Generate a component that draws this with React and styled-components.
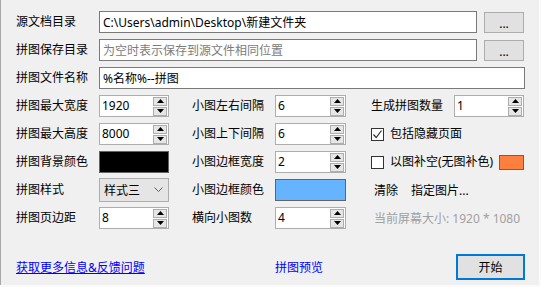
import React from 'react'
import styled, { createGlobalStyle } from 'styled-components'

const GlobalStyle = createGlobalStyle`
  html, body {
    margin: 0;
    padding: 0;
    background: #fafafa;
  }
  body {
    font-family: "Noto Sans", "Noto Sans CJK SC", sans-serif;
    font-size: 12px;
    color: #000;
  }
`

const Panel = styled.div`
  box-sizing: border-box;
  width: 540px;
  height: 285px;
  padding: 11px 14px 0 15px;
  background: #f0f0f0;
  border-left: 1px solid #a8a8a8;
  border-right: 1px solid #fcfcfc;
  display: flex;
  flex-direction: column;
  gap: 6px;
`

const PathRow = styled.div`
  display: flex;
  align-items: center;
  height: 22px;
  width: ${p => p.$full ? '509px' : '508px'};
`

const Label = styled.span`
  flex: 0 0 ${p => p.$width || 83}px;
  line-height: 16px;
  white-space: nowrap;
`

const TextInput = styled.div`
  box-sizing: border-box;
  flex: 1;
  height: 22px;
  padding: 0 3px;
  display: flex;
  align-items: center;
  background: #fff;
  border: 1px solid #7a7a7a;
  color: ${p => p.$placeholder ? '#7c7c7c' : '#000'};
  white-space: nowrap;
  overflow: hidden;
`

const BrowseButton = styled.div`
  box-sizing: border-box;
  flex: 0 0 40px;
  height: 21px;
  margin-left: 7px;
  margin-top: 1px;
  background: #e1e1e1;
  border: 1px solid #adadad;
  display: flex;
  align-items: flex-end;
  justify-content: center;
  padding-bottom: 3px;
  line-height: 10px;
`

const Grid = styled.div`
  display: grid;
  grid-template-columns: 153px 156px 153px;
  grid-auto-rows: 22px;
  column-gap: 23px;
  row-gap: 6px;
`

const Field = styled.div`
  display: flex;
  align-items: center;
`

const SpinBox = styled.div`
  box-sizing: border-box;
  width: ${p => p.$width || 70}px;
  height: 22px;
  background: #fff;
  border: 1px solid #adadad;
  display: flex;
  align-items: center;
  padding-left: 2px;
`

const SpinValue = styled.span`
  flex: 1;
  line-height: 16px;
`

const SpinButtons = styled.div`
  display: flex;
  flex-direction: column;
  gap: 1px;
  margin-right: 1px;
`

const SpinButton = styled.div`
  box-sizing: border-box;
  width: 14px;
  height: 9px;
  background: #e6e6e6;
  border: 1px solid #adadad;
  display: flex;
  align-items: center;
  justify-content: center;
`

const Swatch = styled.div`
  box-sizing: border-box;
  width: ${p => p.$width || 70}px;
  height: ${p => p.$height || 22}px;
  background: ${p => p.$color};
  border: 1px solid #646464;
`

const Select = styled.div`
  box-sizing: border-box;
  width: 70px;
  height: 24px;
  background: #e5e5e5;
  border: 1px solid #adadad;
  display: flex;
  align-items: center;
  justify-content: space-between;
  padding: 0 5px 0 4px;
`

const CheckRow = styled.div`
  display: flex;
  align-items: center;
  gap: 6px;
`

const CheckBox = styled.div`
  box-sizing: border-box;
  flex: 0 0 13px;
  height: 13px;
  background: #fff;
  border: 1px solid #333;
  display: flex;
  align-items: center;
  justify-content: center;
`

const CheckText = styled.span`
  line-height: 16px;
  white-space: nowrap;
  margin-right: auto;
`

const Actions = styled.div`
  display: flex;
  align-items: center;
  gap: 13px;
  padding-left: 3px;
`

const Note = styled.span`
  padding-left: 3px;
  color: #a0a0a0;
  white-space: nowrap;
`

const Footer = styled.div`
  margin-top: 19px;
  display: flex;
  align-items: center;
  height: 26px;
  width: 509px;
`

const Link = styled.span`
  flex: 0 0 ${p => p.$width ? `${p.$width}px` : 'auto'};
  color: #0000ff;
  text-decoration: ${p => p.$underline ? 'underline' : 'none'};
  white-space: nowrap;
`

const StartButton = styled.div`
  box-sizing: border-box;
  margin-left: auto;
  flex: 0 0 69px;
  height: 26px;
  background: #e1e1e1;
  border: 2px solid #0078d7;
  display: flex;
  align-items: center;
  justify-content: center;
`

const Arrow = ({ up }) => (
  <svg width="7" height="4" viewBox="0 0 7 4">
    <polygon points={up ? '3.5,0 7,4 0,4' : '0,0 7,0 3.5,4'} fill="#000" />
  </svg>
)

const Spin = ({ value, width }) => (
  <SpinBox $width={width}>
    <SpinValue>{value}</SpinValue>
    <SpinButtons>
      <SpinButton><Arrow up /></SpinButton>
      <SpinButton><Arrow /></SpinButton>
    </SpinButtons>
  </SpinBox>
)

const Chevron = () => (
  <svg width="9" height="6" viewBox="0 0 9 6">
    <polyline points="0.5,0.5 4.5,4.5 8.5,0.5" fill="none" stroke="#606060" strokeWidth="1" />
  </svg>
)

const Tick = () => (
  <svg width="11" height="11" viewBox="0 0 11 11">
    <polyline points="1.5,5.5 4.2,8.5 9.5,1.5" fill="none" stroke="#333" strokeWidth="1.2" />
  </svg>
)

const App = () => (
  <>
    <GlobalStyle />
    <Panel>
      <PathRow>
        <Label>源文档目录</Label>
        <TextInput>C:\Users\admin\Desktop\新建文件夹</TextInput>
        <BrowseButton>...</BrowseButton>
      </PathRow>
      <PathRow>
        <Label>拼图保存目录</Label>
        <TextInput $placeholder>为空时表示保存到源文件相同位置</TextInput>
        <BrowseButton>...</BrowseButton>
      </PathRow>
      <PathRow $full>
        <Label>拼图文件名称</Label>
        <TextInput>%名称%--拼图</TextInput>
      </PathRow>

      <Grid>
        <Field><Label>拼图最大宽度</Label><Spin value="1920" /></Field>
        <Field><Label>小图左右间隔</Label><Spin value="6" width={71} /></Field>
        <Field><Label>生成拼图数量</Label><Spin value="1" /></Field>

        <Field><Label>拼图最大高度</Label><Spin value="8000" /></Field>
        <Field><Label>小图上下间隔</Label><Spin value="6" width={71} /></Field>
        <CheckRow>
          <CheckBox><Tick /></CheckBox>
          <CheckText>包括隐藏页面</CheckText>
        </CheckRow>

        <Field><Label>拼图背景颜色</Label><Swatch $color="#000" /></Field>
        <Field><Label>小图边框宽度</Label><Spin value="2" width={71} /></Field>
        <CheckRow>
          <CheckBox />
          <CheckText>以图补空(无图补色)</CheckText>
          <Swatch $color="#ff7f3f" $width={27} $height={15} />
        </CheckRow>

        <Field>
          <Label>拼图样式</Label>
          <Select><span>样式三</span><Chevron /></Select>
        </Field>
        <Field><Label>小图边框颜色</Label><Swatch $color="#66b3ff" $width={71} /></Field>
        <Actions><span>清除</span><span>指定图片...</span></Actions>

        <Field><Label>拼图页边距</Label><Spin value="8" /></Field>
        <Field><Label>横向小图数</Label><Spin value="4" width={71} /></Field>
        <Field><Note>当前屏幕大小: 1920 * 1080</Note></Field>
      </Grid>

      <Footer>
        <Link $underline $width={259}>获取更多信息&amp;反馈问题</Link>
        <Link>拼图预览</Link>
        <StartButton>开始</StartButton>
      </Footer>
    </Panel>
  </>
)

export default App
